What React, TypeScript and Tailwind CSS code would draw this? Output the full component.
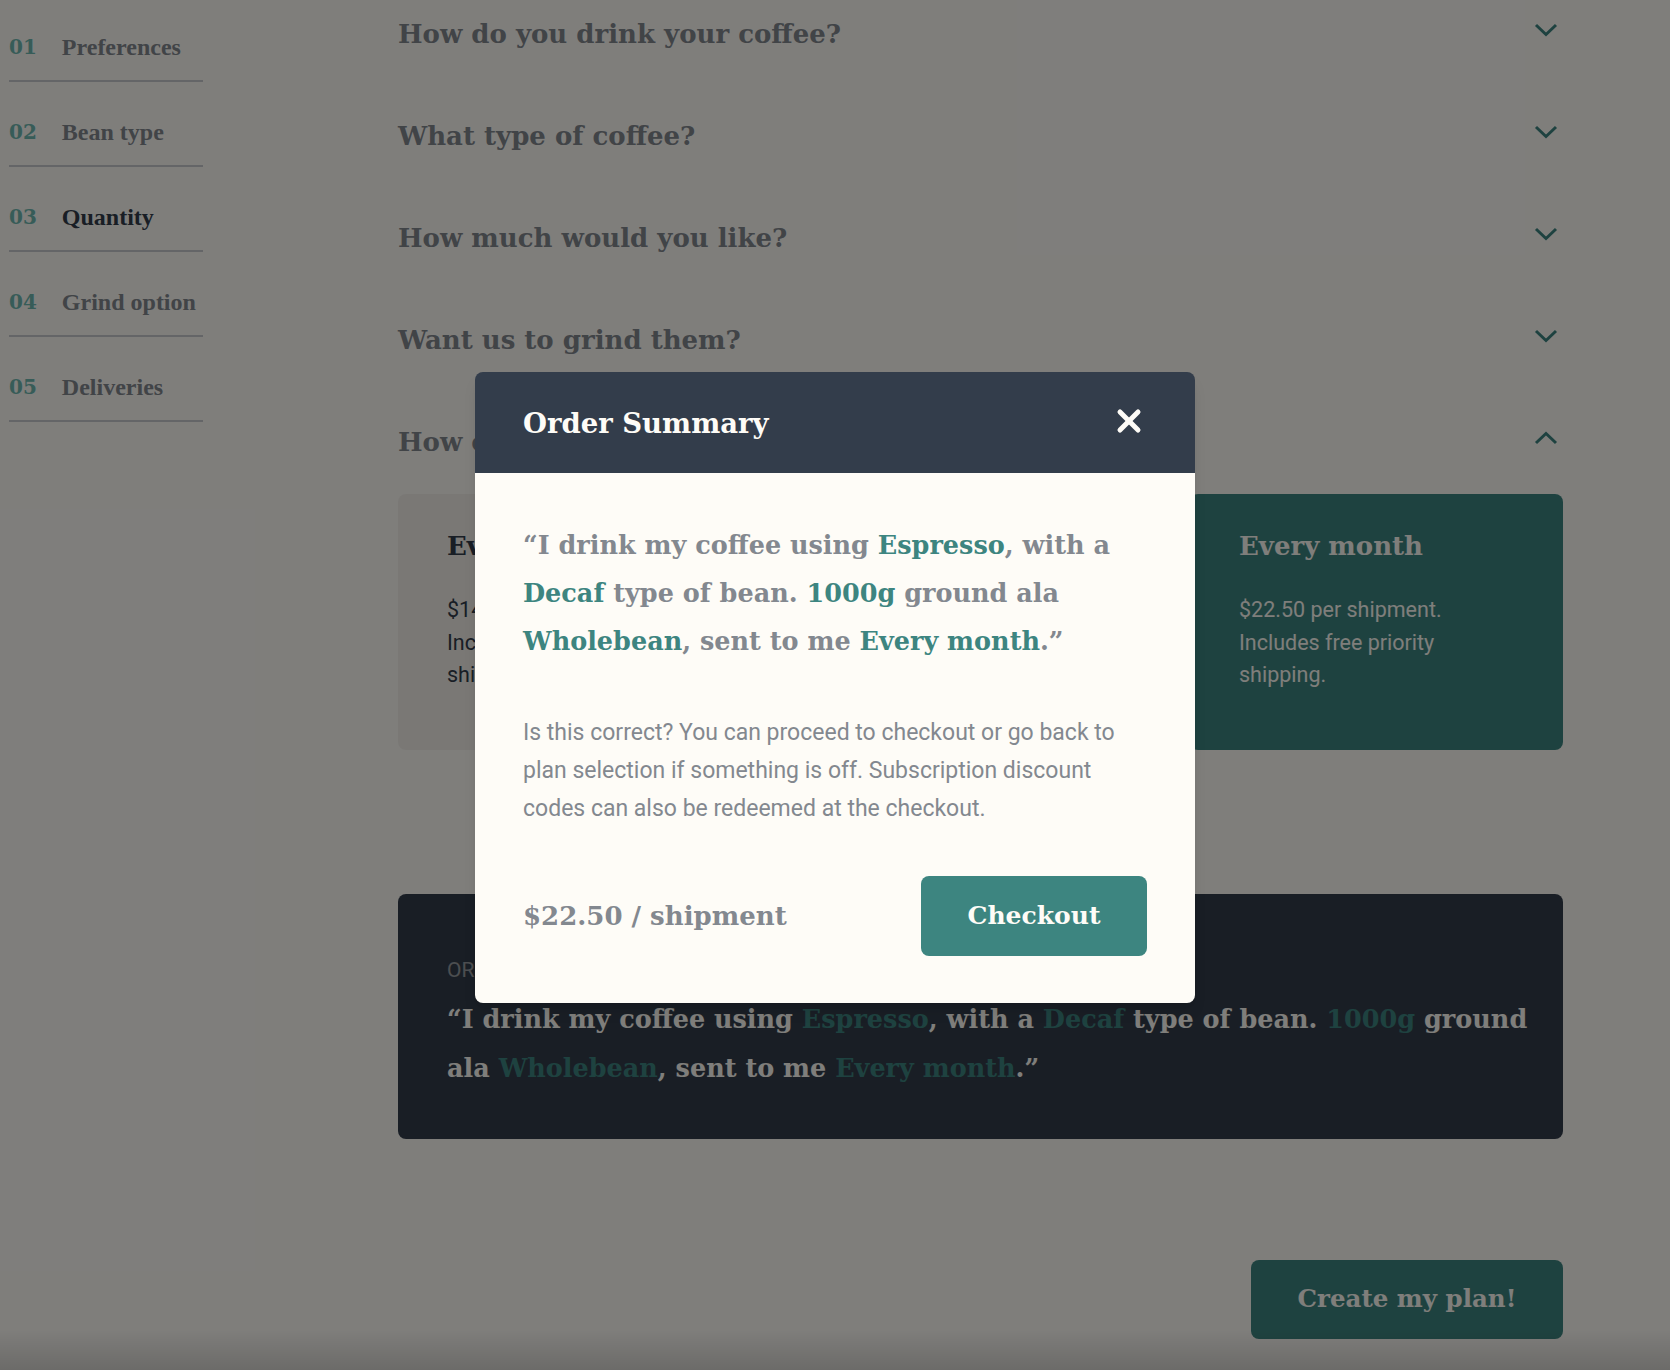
import React from "react";

const TEAL = "text-[#3D8580]";

const steps = [
  { n: "01", label: "Preferences", active: false },
  { n: "02", label: "Bean type", active: false },
  { n: "03", label: "Quantity", active: true },
  { n: "04", label: "Grind option", active: false },
  { n: "05", label: "Deliveries", active: false },
];

const questions = [
  { q: "How do you drink your coffee?", open: false },
  { q: "What type of coffee?", open: false },
  { q: "How much would you like?", open: false },
  { q: "Want us to grind them?", open: false },
  { q: "How often should we deliver?", open: true },
];

function Chevron({ up }: { up?: boolean }) {
  return (
    <svg width="24" height="14" viewBox="0 0 24 14" fill="none" className="shrink-0">
      <polyline
        points={up ? "2,12 12,2.5 22,12" : "2,2 12,11.5 22,2"}
        stroke="#3D8580"
        strokeWidth="3"
        fill="none"
      />
    </svg>
  );
}

function CloseIcon() {
  return (
    <svg width="26" height="26" viewBox="0 0 26 26" fill="none">
      <line x1="4" y1="4" x2="22" y2="22" stroke="#FEFCF7" strokeWidth="5" strokeLinecap="round" />
      <line x1="22" y1="4" x2="4" y2="22" stroke="#FEFCF7" strokeWidth="5" strokeLinecap="round" />
    </svg>
  );
}

function Hl({ children, cls }: { children: React.ReactNode; cls: string }) {
  return <span className={cls}>{children}</span>;
}

export default function App() {
  return (
    <div className="relative h-[1370px] w-full overflow-hidden bg-[#FEFCF7]">
      {/* page */}
      <div className="flex pl-[9px]">
        <aside className="-mt-[3px] w-[194px] shrink-0">
          {steps.map((s) => (
            <div
              key={s.n}
              className="flex items-center gap-[25px] border-b-2 border-[#C8CACE] pt-[34px] pb-[17px]"
            >
              <span className="font-['DejaVu_Serif',serif] text-[20px] leading-[32px] font-bold text-[#6FB8B0]">
                {s.n}
              </span>
              <span
                className={
                  "font-['Liberation_Serif',serif] text-[24px] leading-[32px] font-bold " +
                  (s.active ? "text-[#333D4B]" : "text-[#83888F]")
                }
              >
                {s.label}
              </span>
            </div>
          ))}
        </aside>

        <main className="ml-[195px] flex w-[1165px] flex-col">
          <div className="flex flex-col gap-[42px]">
            {questions.map((q) => (
              <div key={q.q} className="flex h-[60px] items-center justify-between pr-[5px]">
                <h2 className="pt-[8px] font-['DejaVu_Serif',serif] text-[26px] leading-[32px] font-bold text-[#83888F]">
                  {q.q}
                </h2>
                <Chevron up={q.open} />
              </div>
            ))}
          </div>

          <div className="mt-[26px] grid h-[256px] grid-cols-3 gap-[23px]">
            <div className="rounded-[8px] bg-[#F4F1EB] px-[49px] pt-[36px]">
              <h3 className="font-['DejaVu_Serif',serif] text-[26px] leading-[32px] font-bold text-[#333D4B]">
                Every week
              </h3>
              <p className="mt-[32px] font-['Roboto',sans-serif] text-[21.5px] leading-[32.5px] text-[#333D4B]">
                $14.00 per shipment.
                <br />
                Includes free first-class
                <br />
                shipping.
              </p>
            </div>
            <div className="rounded-[8px] bg-[#F4F1EB] px-[49px] pt-[36px]">
              <h3 className="font-['DejaVu_Serif',serif] text-[26px] leading-[32px] font-bold text-[#333D4B]">
                Every 2 weeks
              </h3>
              <p className="mt-[32px] font-['Roboto',sans-serif] text-[21.5px] leading-[32.5px] text-[#333D4B]">
                $17.25 per shipment.
                <br />
                Includes free priority
                <br />
                shipping.
              </p>
            </div>
            <div className="rounded-[8px] bg-[#3D8580] px-[49px] pt-[36px]">
              <h3 className="font-['DejaVu_Serif',serif] text-[26px] leading-[32px] font-bold text-[#FEFCF7]">
                Every month
              </h3>
              <p className="mt-[32px] font-['Roboto',sans-serif] text-[21.5px] leading-[32.5px] text-[#FEFCF7]">
                $22.50 per shipment.
                <br />
                Includes free priority
                <br />
                shipping.
              </p>
            </div>
          </div>

          <div className="mt-[144px] rounded-[8px] bg-[#333D4B] pt-[63px] pr-[30px] pb-[46px] pl-[49px]">
            <p className="font-['Roboto',sans-serif] text-[21px] leading-[26px] text-[#FEFCF7]/50 uppercase">
              Order Summary
            </p>
            <p className="mt-[12px] whitespace-nowrap font-['DejaVu_Serif',serif] text-[25.5px] leading-[49px] font-bold text-[#FEFCF7]">
              “I drink my coffee using <Hl cls={TEAL}>Espresso</Hl>, with a <Hl cls={TEAL}>Decaf</Hl> type of bean.{" "}
              <Hl cls={TEAL}>1000g</Hl> ground
              <br />
              ala <Hl cls={TEAL}>Wholebean</Hl>, sent to me <Hl cls={TEAL}>Every month</Hl>.”
            </p>
          </div>

          <button className="mt-[121px] flex h-[79px] w-[312px] items-center justify-center self-end rounded-[8px] bg-[#3D8580] font-['DejaVu_Serif',serif] text-[24.5px] font-bold text-[#FEFCF7]">
            Create my plan!
          </button>
        </main>
      </div>

      {/* footer shadow hint */}
      <div className="absolute right-0 bottom-0 left-0 h-[40px] bg-gradient-to-b from-transparent to-black/15" />

      {/* overlay */}
      <div className="absolute inset-0 bg-black/50" />

      {/* modal */}
      <div className="absolute inset-0 flex items-center justify-center pt-[5px]">
        <div className="w-[720px] overflow-hidden rounded-[8px] shadow-lg">
          <div className="flex h-[101px] items-center justify-between bg-[#333D4B] px-[48px]">
            <h2 className="font-['DejaVu_Serif',serif] text-[27.5px] leading-[36px] font-bold text-[#FEFCF7]">
              Order Summary
            </h2>
            <button className="mr-[5px] mb-[4px]" aria-label="Close">
              <CloseIcon />
            </button>
          </div>
          <div className="bg-[#FEFCF7] px-[48px] pt-[48px] pb-[47px]">
            <p className="whitespace-nowrap font-['DejaVu_Serif',serif] text-[25.5px] leading-[48px] font-bold text-[#83888F]">
              “I drink my coffee using <Hl cls={TEAL}>Espresso</Hl>, with a
              <br />
              <Hl cls={TEAL}>Decaf</Hl> type of bean. <Hl cls={TEAL}>1000g</Hl> ground ala
              <br />
              <Hl cls={TEAL}>Wholebean</Hl>, sent to me <Hl cls={TEAL}>Every month</Hl>.”
            </p>
            <p className="mt-[49px] whitespace-nowrap font-['Roboto',sans-serif] text-[23px] leading-[38px] text-[#83888F]">
              Is this correct? You can proceed to checkout or go back to
              <br />
              plan selection if something is off. Subscription discount
              <br />
              codes can also be redeemed at the checkout.
            </p>
            <div className="mt-[48px] flex items-center justify-between">
              <span className="font-['DejaVu_Serif',serif] text-[26px] leading-[32px] font-bold text-[#83888F]">
                $22.50 / shipment
              </span>
              <button className="flex h-[80px] w-[226px] items-center justify-center rounded-[8px] bg-[#3D8580] font-['DejaVu_Serif',serif] text-[25px] font-bold text-[#FEFCF7]">
                Checkout
              </button>
            </div>
          </div>
        </div>
      </div>
    </div>
  );
}
